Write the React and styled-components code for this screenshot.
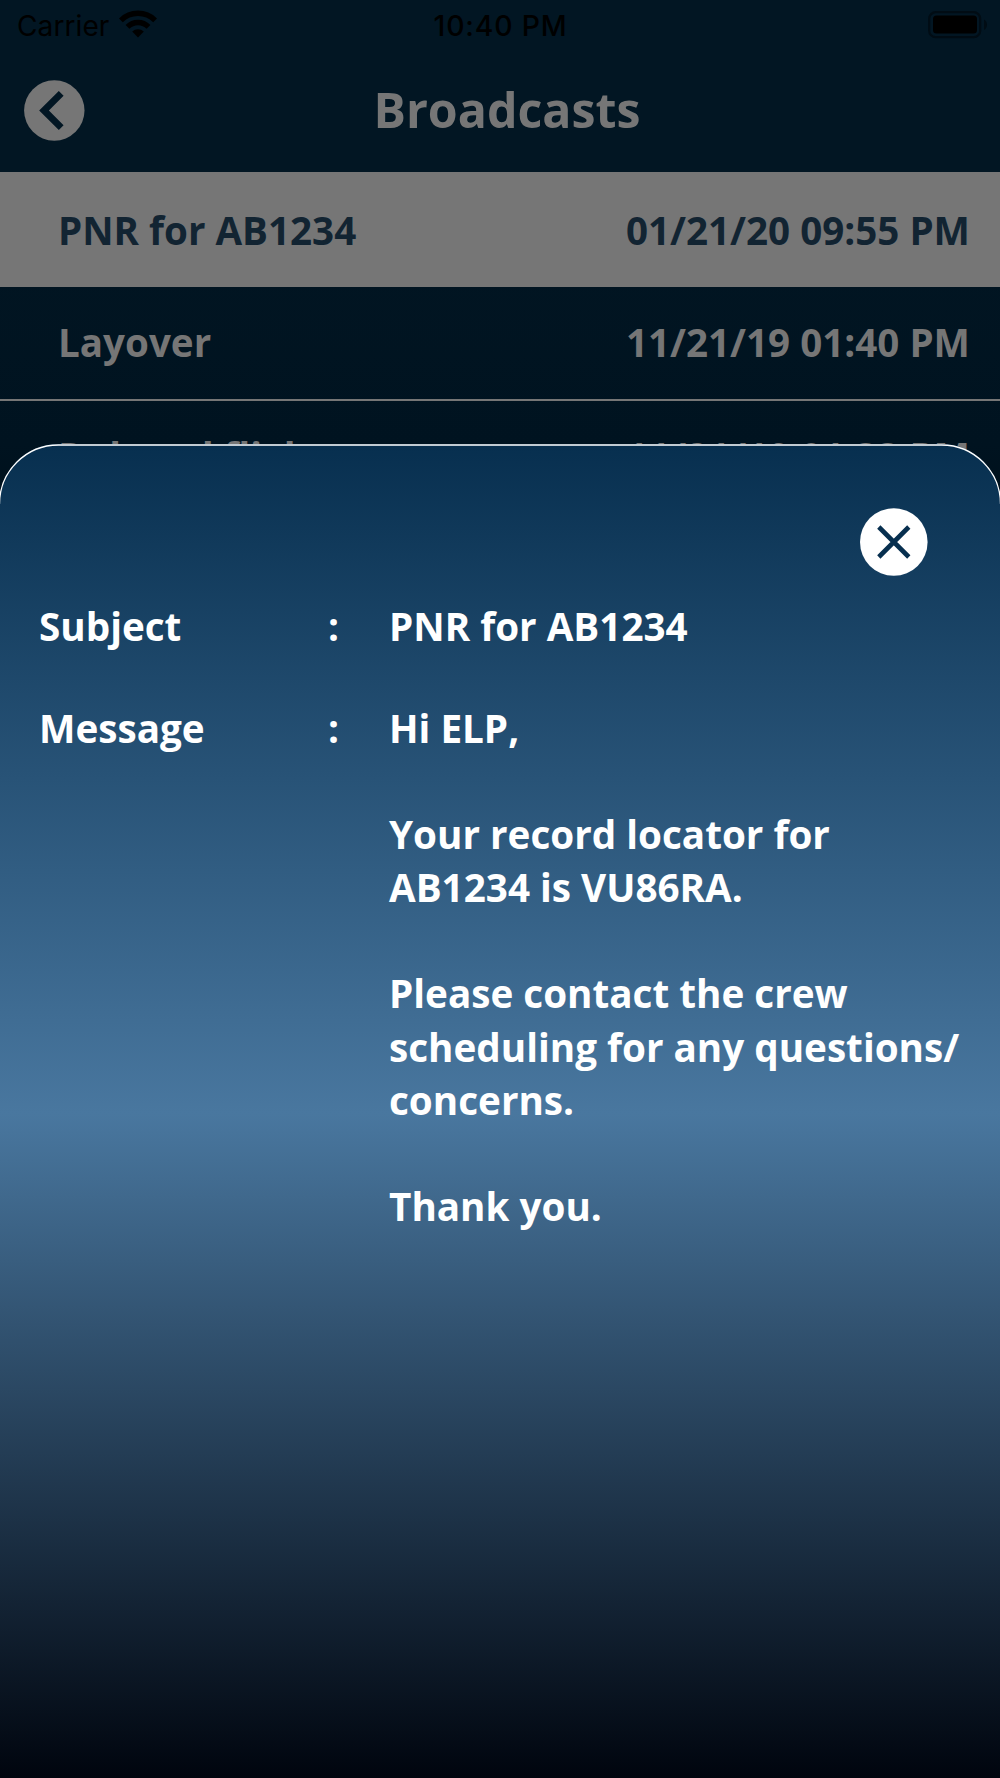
import React from 'react';
import styled, { createGlobalStyle } from 'styled-components';

const GlobalStyle = createGlobalStyle`
  *, *::before, *::after { box-sizing: border-box; }
  body { margin: 0; background: #000; }
`;

const Screen = styled.div`
  position: relative;
  width: 1000px;
  height: 1778px;
  overflow: hidden;
  background: linear-gradient(#021623 0, #021623 172px, #001320 445px, #00101b 520px);
  font-family: 'Open Sans', 'Noto Sans', sans-serif;
  font-weight: 700;
  color: #767676;
`;

const StatusBar = styled.div`
  display: grid;
  grid-template-columns: 1fr auto 1fr;
  align-items: center;
  height: 50px;
  padding: 0 12px 0 17px;
  font-family: Inter, sans-serif;
  color: #000;
`;

const Carrier = styled.div`
  display: flex;
  align-items: center;
  gap: 10px;
  font-size: 28px;
  line-height: 34px;
  font-weight: 400;
  letter-spacing: 0.1px;

  span { padding-top: 2px; }
  svg { margin-bottom: 2px; }
`;

const Clock = styled.div`
  padding: 2px 4px 0 0;
  font-size: 28.4px;
  line-height: 34px;
  font-weight: 500;
  letter-spacing: 0.8px;
`;

const BatterySlot = styled.div`
  display: flex;
  justify-content: flex-end;
`;

const Header = styled.header`
  display: grid;
  grid-template-columns: 62px 1fr 48px;
  align-items: center;
  height: 122px;
  padding: 0 24px 2px;
`;

const IconButton = styled.button`
  display: block;
  width: ${(p) => p.$size}px;
  height: ${(p) => p.$size}px;
  padding: 0;
  border: 0;
  background: none;

  svg { display: block; }
`;

const Title = styled.h1`
  margin: 0 0 2px;
  text-align: center;
  font-size: 48.3px;
  line-height: 66px;
  font-weight: 700;
`;

const Row = styled.div`
  display: flex;
  justify-content: space-between;
  align-items: center;
  height: ${(p) => (p.$selected ? 115 : 114)}px;
  padding: ${(p) => (p.$selected ? 1 : 0)}px 30px 0 58px;
  font-size: 38.6px;
  line-height: 53px;
  white-space: nowrap;
  color: ${(p) => (p.$selected ? '#122432' : '#767676')};
  background: ${(p) => (p.$selected ? '#767676' : 'transparent')};
  border-bottom: ${(p) => (p.$selected ? '0' : '2px solid #767676')};

  &:nth-of-type(n + 3) { padding-bottom: 1px; }
`;

const Sheet = styled.section`
  position: absolute;
  left: 0;
  right: 0;
  top: 444px;
  bottom: 0;
  padding: 64px 0 0 39px;
  border-radius: 58px 58px 0 0;
  background: linear-gradient(#072f4f 0%, #49779f 50.2%, #00050e 100%);
  color: #fff;
`;

const SheetEdge = styled.svg`
  position: absolute;
  left: 0;
  top: 0;
`;

const SheetActions = styled.div`
  display: flex;
  justify-content: flex-end;
  padding-right: 72px;
  margin-bottom: 24px;
`;

const Field = styled.div`
  display: grid;
  grid-template-columns: 289px 61px 1fr;
  margin-bottom: 48.5px;
  font-size: 38.65px;
  line-height: 53.15px;
`;

const FieldText = styled.div`
  white-space: pre-line;
`;

const messages = [
  { subject: 'PNR for AB1234', time: '01/21/20 09:55 PM', selected: true },
  { subject: 'Layover', time: '11/21/19 01:40 PM' },
  { subject: 'Delayed flight', time: '11/21/19 01:33 PM' },
];

const body = `Hi ELP,

Your record locator for
AB1234 is VU86RA.

Please contact the crew
scheduling for any questions/
concerns.

Thank you.`;

const WifiIcon = () => (
  <svg width="38" height="28" viewBox="0 0 38 28">
    <g fill="none" stroke="#000" strokeWidth="5.4">
      <path d="M1.9 10.3a24.2 24.2 0 0 1 34.2 0" />
      <path d="M8.5 16.9a14.8 14.8 0 0 1 21 0" />
    </g>
    <path d="M19 27.4l-5.8-5.8a8.3 8.3 0 0 1 11.6 0z" />
  </svg>
);

const BatteryIcon = () => (
  <svg width="60" height="28" viewBox="0 0 60 28">
    <rect x="1.2" y="1.2" width="51" height="25" rx="6.5" fill="none" stroke="#010c14" strokeWidth="2.2" />
    <rect x="5" y="4.6" width="44" height="18" rx="3.5" />
    <path d="M56 8.500c4 2 4 8.500 0 10.500z" fill="#010c14" />
  </svg>
);

const BackIcon = () => (
  <svg width="61" height="61" viewBox="0 0 61 61">
    <circle cx="30.300" cy="30.500" r="30.200" fill="#767676" />
    <path d="M37.200 13.400L20 30.500l17.200 17.100" fill="none" stroke="#021623" strokeWidth="6.800" />
  </svg>
);

const CloseIcon = () => (
  <svg width="68" height="68" viewBox="0 0 68 68">
    <circle cx="33.800" cy="34" r="33.800" fill="#fff" />
    <path d="M18.800 19l30 30M48.800 19l-30 30" stroke="#072f4f" strokeWidth="4.600" />
  </svg>
);

export default function App() {
  return (
    <>
      <GlobalStyle />
      <Screen>
        <StatusBar>
          <Carrier>
            <span>Carrier</span>
            <WifiIcon />
          </Carrier>
          <Clock>10:40 PM</Clock>
          <BatterySlot>
            <BatteryIcon />
          </BatterySlot>
        </StatusBar>
        <Header>
          <IconButton $size={61} aria-label="Back">
            <BackIcon />
          </IconButton>
          <Title>Broadcasts</Title>
        </Header>
        {messages.map((m) => (
          <Row key={m.subject} $selected={m.selected}>
            <span>{m.subject}</span>
            <span>{m.time}</span>
          </Row>
        ))}
        <Sheet>
          <SheetEdge width="1000" height="60" viewBox="0 0 1000 60" aria-hidden="true">
            <path
              d="M-.5 60A59 59 0 0 1 58.500 1H941.500A59 59 0 0 1 1000.500 60"
              fill="none"
              stroke="#fff"
              strokeWidth="1.300"
            />
          </SheetEdge>
          <SheetActions>
            <IconButton $size={68} aria-label="Close">
              <CloseIcon />
            </IconButton>
          </SheetActions>
          <Field>
            <span>Subject</span>
            <span>:</span>
            <FieldText>PNR for AB1234</FieldText>
          </Field>
          <Field>
            <span>Message</span>
            <span>:</span>
            <FieldText>{body}</FieldText>
          </Field>
        </Sheet>
      </Screen>
    </>
  );
}
